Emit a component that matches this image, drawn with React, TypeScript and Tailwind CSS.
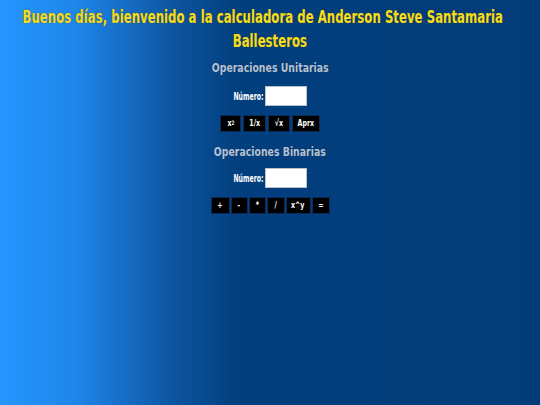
import React from "react";

const font = { fontFamily: "'DejaVu Sans', 'Noto Sans', sans-serif" };

function Btn({ label, w }: { label: React.ReactNode; w: string }) {
  return (
    <button
      className={`h-[17px] ${w} bg-black text-white text-[9px] font-bold border border-[#0b2a55] flex items-center justify-center leading-none overflow-visible`}
    >
      <span className="inline-block whitespace-nowrap scale-x-[0.7]">{label}</span>
    </button>
  );
}

function NumberRow() {
  return (
    <div className="flex items-center justify-center">
      <span className="inline-flex justify-end w-[30px] mr-[1px]">
        <span className="inline-block whitespace-nowrap origin-right scale-x-[0.62] text-white text-[10px] font-bold">
          Número:
        </span>
      </span>
      <input className="w-[42px] h-[20px] bg-white border border-[#b8c0c8] outline-none" />
    </div>
  );
}

export default function App() {
  return (
    <div
      className="w-[540px] h-[405px] overflow-hidden bg-[linear-gradient(to_right,#2596ff_0%,#1f86ea_14%,#0d55a0_32%,#023f7e_44%,#033c79_100%)] flex flex-col items-center"
      style={font}
    >
      <h1 className="mt-[5px] text-[#f2dc26] text-[18px] font-bold leading-[24px] text-center whitespace-nowrap scale-x-[0.653] [text-shadow:0_0_1px_#4a4000]">
        <span className="block pr-[22px]">
          Buenos días, bienvenido a la calculadora de Anderson Steve Santamaria
        </span>
        <span className="block">Ballesteros</span>
      </h1>
      <h2 className="mt-[7px] text-[#b2c3d8] text-[13px] font-bold leading-[16px] whitespace-nowrap scale-x-[0.72] [text-shadow:0_0_1px_#1a2a40]">
        Operaciones Unitarias
      </h2>
      <div className="mt-[10px]">
        <NumberRow />
      </div>
      <div className="mt-[9px] flex gap-[2px]">
        <Btn w="w-[21px]" label={<span>x<sup className="text-[6px] relative -top-[1px]">2</sup></span>} />
        <Btn w="w-[23px]" label="1/x" />
        <Btn w="w-[22px]" label="√x" />
        <Btn w="w-[28px]" label="Aprx" />
      </div>
      <h2 className="mt-[12px] text-[#b2c3d8] text-[13px] font-bold leading-[16px] whitespace-nowrap scale-x-[0.72] [text-shadow:0_0_1px_#1a2a40]">
        Operaciones Binarias
      </h2>
      <div className="mt-[8px]">
        <NumberRow />
      </div>
      <div className="mt-[9px] flex gap-[1px]">
        <Btn w="w-[19px]" label="+" />
        <Btn w="w-[17px]" label="-" />
        <Btn w="w-[17px]" label="*" />
        <Btn w="w-[18px]" label="/" />
        <Btn w="w-[25px]" label="x^y" />
        <Btn w="w-[18px]" label="=" />
      </div>
    </div>
  );
}
